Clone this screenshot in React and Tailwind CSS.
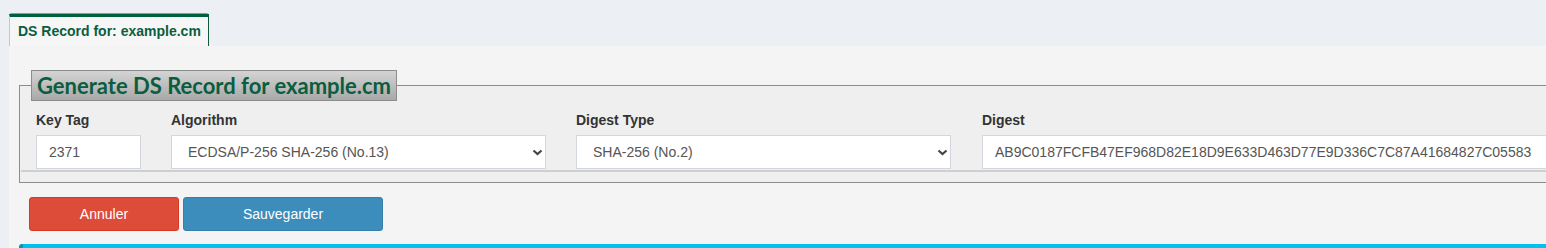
import React from "react";

const font = { fontFamily: '"Liberation Sans", Arial, sans-serif' };

function Chevron() {
  return (
    <svg width="11" height="7" viewBox="0 0 11 7" className="absolute right-[3px] top-[14px] pointer-events-none">
      <path d="M1.5 1.5 L5.5 5 L9.5 1.5" fill="none" stroke="#444" strokeWidth="2.2" />
    </svg>
  );
}

function Field({ label, children, className }) {
  return (
    <div className={`flex flex-col ${className}`}>
      <label className="text-[14px] font-bold leading-[20px] text-[#333] mb-[5px]">{label}</label>
      {children}
    </div>
  );
}

function Select({ value }) {
  return (
    <div className="relative">
      <select
        defaultValue={value}
        className="appearance-none w-full h-[34px] border border-[#d2d6de] bg-white pl-[16px] pr-[24px] text-[14px] text-[#555] outline-none"
      >
        <option>{value}</option>
      </select>
      <Chevron />
    </div>
  );
}

export default function App() {
  return (
    <div className="h-[248px] w-full overflow-hidden bg-[#ecf0f5] pt-[13px]" style={font}>
      <div className="pl-[9px]">
        <div className="w-[200px] h-[33px] bg-[#f6f6f6] border-t border-t-[#6fa3c8] rounded-t-[3px]">
          <div className="h-full border-t-[3px] border-t-[#005f3d] border-l border-l-[#c8c8c8] border-r border-r-[#0d5a3c] flex items-center pl-[8px] text-[14px] font-bold text-[#0b5d3f]">
            DS Record for: example.cm
          </div>
        </div>
        <div className="bg-[#f4f4f4] w-[1600px] pt-[24px] pl-[10px] pb-[20px]">
          <fieldset className="w-[1600px] border border-[#8c8c8c] bg-[#efefef] p-0 m-0">
            <legend
              className="ml-[11px] px-[5px] h-[31px] border border-[#8c8c8c] bg-gradient-to-b from-[#d4d4d4] to-[#a8a8a8] text-[22px] font-bold leading-[29px] text-[#0b5d3f]"
              style={{ fontFamily: '"Lato", "Open Sans", sans-serif' }}
            >
              Generate DS Record for example.cm
            </legend>
            <div className="flex pt-[9px] pl-[16px]">
              <Field label="Key Tag" className="w-[105px]">
                <input
                  defaultValue="2371"
                  className="w-full h-[34px] border border-[#d2d6de] bg-white px-[12px] text-[14px] text-[#555] outline-none"
                />
              </Field>
              <Field label="Algorithm" className="w-[375px] ml-[30px]">
                <Select value="ECDSA/P-256 SHA-256 (No.13)" />
              </Field>
              <Field label="Digest Type" className="w-[375px] ml-[30px]">
                <Select value="SHA-256 (No.2)" />
              </Field>
              <Field label="Digest" className="w-[620px] ml-[31px]">
                <input
                  defaultValue="AB9C0187FCFB47EF968D82E18D9E633D463D77E9D336C7C87A41684827C05583"
                  className="w-full h-[34px] border border-[#d2d6de] bg-white px-[12px] text-[14px] text-[#555] outline-none"
                />
              </Field>
            </div>
            <div className="mx-[1px] mt-[1px] mb-[10px] border-b-2 border-[#cfcfcf]" />
          </fieldset>
          <div className="flex gap-[4px] mt-[14px] pl-[10px]">
            <button className="w-[150px] h-[34px] rounded-[3px] border border-[#d73925] bg-[#dd4b39] text-[14px] text-white">
              Annuler
            </button>
            <button className="w-[200px] h-[34px] rounded-[3px] border border-[#367fa9] bg-[#3c8dbc] text-[14px] text-white">
              Sauvegarder
            </button>
          </div>
          <div className="mt-[13px] h-[20px] rounded-[3px] border-l-[4px] border-[#0097bc] bg-[#00c0ef]" />
        </div>
      </div>
    </div>
  );
}
